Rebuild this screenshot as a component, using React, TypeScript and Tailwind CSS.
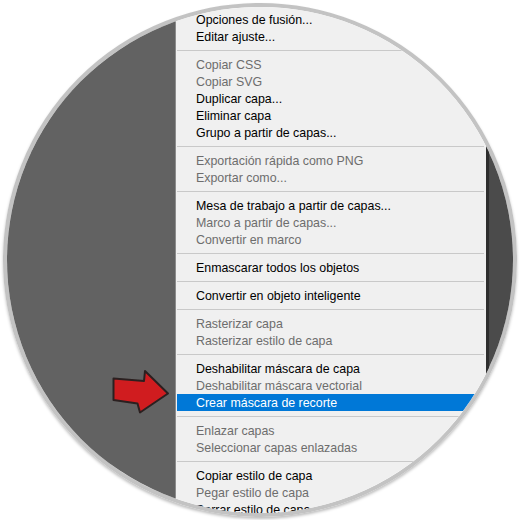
type MenuEntry = {label: string; disabled?: boolean; active?: boolean} | 'sep';

const entries: MenuEntry[] = [
  {label: 'Opciones de fusión...'},
  {label: 'Editar ajuste...'},
  'sep',
  {label: 'Copiar CSS', disabled: true},
  {label: 'Copiar SVG', disabled: true},
  {label: 'Duplicar capa...'},
  {label: 'Eliminar capa'},
  {label: 'Grupo a partir de capas...'},
  'sep',
  {label: 'Exportación rápida como PNG', disabled: true},
  {label: 'Exportar como...', disabled: true},
  'sep',
  {label: 'Mesa de trabajo a partir de capas...'},
  {label: 'Marco a partir de capas...', disabled: true},
  {label: 'Convertir en marco', disabled: true},
  'sep',
  {label: 'Enmascarar todos los objetos'},
  'sep',
  {label: 'Convertir en objeto inteligente'},
  'sep',
  {label: 'Rasterizar capa', disabled: true},
  {label: 'Rasterizar estilo de capa', disabled: true},
  'sep',
  {label: 'Deshabilitar máscara de capa'},
  {label: 'Deshabilitar máscara vectorial', disabled: true},
  {label: 'Crear máscara de recorte', active: true},
  'sep',
  {label: 'Enlazar capas', disabled: true},
  {label: 'Seleccionar capas enlazadas', disabled: true},
  'sep',
  {label: 'Copiar estilo de capa'},
  {label: 'Pegar estilo de capa', disabled: true},
  {label: 'Borrar estilo de capa'},
];

function MenuItem({entry}: {entry: Exclude<MenuEntry, 'sep'>}) {
  let color = 'text-[#000000]';
  if (entry.disabled) color = 'text-[#6d6d6d]';
  if (entry.active) color = 'text-white bg-[#0078d7]';
  return (
    <div className={`h-[17px] leading-[19px] pl-[19px] whitespace-nowrap ${color}`}>
      {entry.label}
    </div>
  );
}

export default function App() {
  return (
    <div className="relative w-[520px] h-[520px] bg-white p-[3px] font-['Liberation_Sans',Arial,sans-serif] text-[12.4px]">
      {/* circular crop of the Photoshop layer menu */}
      <div className="w-[514px] h-[514px] rounded-full border-4 border-[#c3c3c3] overflow-hidden flex shadow-[0_2px_3px_rgba(0,0,0,0.25)]">
        <div className="w-[168px] shrink-0 bg-[#626262]" />
        <div className="w-[311px] shrink-0 bg-[#f0f0f0] border-l border-[#8c8c8c] pl-px pr-[2px] pt-[4px]">
          {entries.map((entry, i) =>
            entry === 'sep' ? (
              <div key={i} className="h-[11px] flex items-center">
                <div className="h-px w-full bg-[#c9c9c9]" />
              </div>
            ) : (
              <MenuItem key={i} entry={entry} />
            ),
          )}
        </div>
        <div className="flex-1 bg-[#4b4b4b] border-l-[3px] border-[#2e2e2e]" />
      </div>

      {/* red pointer arrow */}
      <svg className="absolute left-0 top-0 pointer-events-none" width="520" height="520" viewBox="0 0 520 520">
        <polygon
          points="113.5,378.5 144,381 145,371 168,393.5 140,412.5 137.5,403.5 113.5,400"
          fill="#d01c1f"
          stroke="#2b2020"
          strokeWidth="2"
          strokeLinejoin="round"
        />
      </svg>
    </div>
  );
}
